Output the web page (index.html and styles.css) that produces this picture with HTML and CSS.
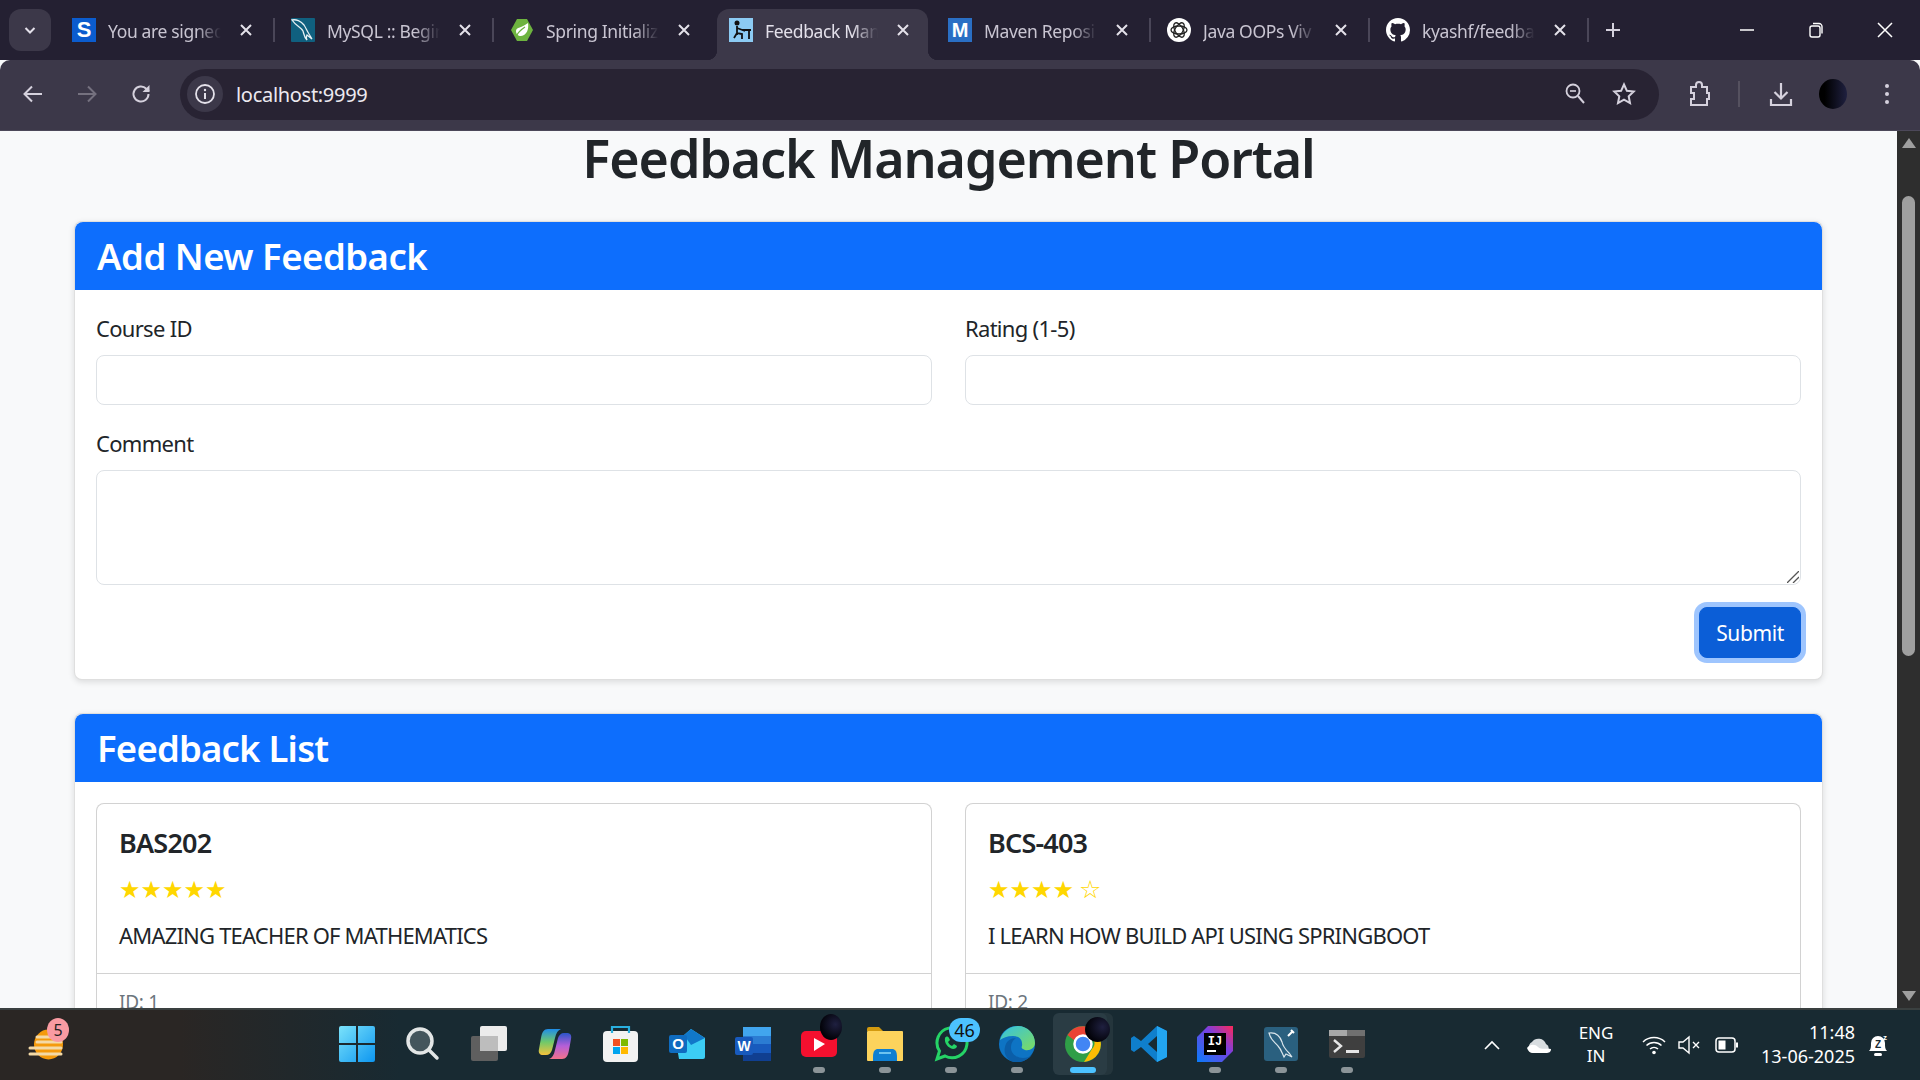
FILE: index.html
```html
<!doctype html>
<html>
<head>
<meta charset="utf-8">
<title>Feedback Management Portal</title>
<link rel="stylesheet" href="styles.css">
</head>
<body>

<!-- tab strip -->
<div class="tabstrip">
	<div class="tabmenu"><svg width="14" height="14" viewBox="0 0 14 14"><path d="M2.5 5l4.5 4.5L11.500 5" fill="none" stroke="#e4e1ea" stroke-width="2"/></svg></div>
	<div class="tabs">
		<div class="tab sep">
			<svg class="fav" viewBox="0 0 24 24"><rect width="24" height="24" fill="#0b5cce"/><text x="12" y="19" text-anchor="middle" font-family="Liberation Sans" font-weight="700" font-size="22" fill="#fff">S</text></svg>
			<span class="tabname">You are signed</span>
			<svg class="tabx" width="12" height="12" viewBox="0 0 12 12"><path d="M1 1l10 10M11 1L1 11" stroke="#e4e1ea" stroke-width="2"/></svg>
		</div>
		<div class="tab sep">
			<svg class="fav" viewBox="0 0 24 24"><rect width="24" height="24" rx="1" fill="#10607f"/><path d="M1 2c4-1 9 1 12 5 2 3 3 6 5 9l3 5-5-4c-1 2-1 3 0 5-3-3-3-6-4-9-2-4-7-5-11-11z" fill="none" stroke="#e6f0f4" stroke-width="1.300"/></svg>
			<span class="tabname">MySQL :: Begin</span>
			<svg class="tabx" width="12" height="12" viewBox="0 0 12 12"><path d="M1 1l10 10M11 1L1 11" stroke="#e4e1ea" stroke-width="2"/></svg>
		</div>
		<div class="tab">
			<svg class="fav" viewBox="0 0 24 24"><path d="M7 1h10l6 11-6 11H7L1 12z" fill="#6db33f"/><path d="M18 5c1 6-1 12-7 13-3 0-5-2-5-5 0-4 6-3 12-8z" fill="#fff"/><path d="M7 17c2-4 5-6 8-8" stroke="#6db33f" stroke-width="1.200" fill="none"/></svg>
			<span class="tabname">Spring Initializ</span>
			<svg class="tabx" width="12" height="12" viewBox="0 0 12 12"><path d="M1 1l10 10M11 1L1 11" stroke="#e4e1ea" stroke-width="2"/></svg>
		</div>
		<div class="tab active">
			<svg class="fav" viewBox="0 0 24 24"><rect width="24" height="24" fill="#8ccbf3"/><circle cx="8" cy="5" r="2.500" fill="#111"/><path d="M8 8v9M8 10l8 3M5 20l3-5 5 1v5M13 12h9M20 12v9" stroke="#111" stroke-width="1.800" fill="none"/></svg>
			<span class="tabname">Feedback Man</span>
			<svg class="tabx" width="12" height="12" viewBox="0 0 12 12"><path d="M1 1l10 10M11 1L1 11" stroke="#e4e1ea" stroke-width="2"/></svg>
		</div>
		<div class="tab sep">
			<svg class="fav" viewBox="0 0 24 24"><rect width="24" height="24" fill="#2a6fc4"/><text x="12" y="19" text-anchor="middle" font-family="Liberation Sans" font-weight="700" font-size="20" fill="#fff">M</text></svg>
			<span class="tabname">Maven Reposi</span>
			<svg class="tabx" width="12" height="12" viewBox="0 0 12 12"><path d="M1 1l10 10M11 1L1 11" stroke="#e4e1ea" stroke-width="2"/></svg>
		</div>
		<div class="tab sep">
			<svg class="fav" viewBox="0 0 24 24"><circle cx="12" cy="12" r="12" fill="#fff"/><g fill="none" stroke="#222" stroke-width="1.300"><ellipse cx="12" cy="12" rx="8" ry="4"/><ellipse cx="12" cy="12" rx="8" ry="4" transform="rotate(60 12 12)"/><ellipse cx="12" cy="12" rx="8" ry="4" transform="rotate(120 12 12)"/></g></svg>
			<span class="tabname">Java OOPs Viv</span>
			<svg class="tabx" width="12" height="12" viewBox="0 0 12 12"><path d="M1 1l10 10M11 1L1 11" stroke="#e4e1ea" stroke-width="2"/></svg>
		</div>
		<div class="tab sep">
			<svg class="fav" viewBox="0 0 16 16"><path fill="#fff" d="M8 0C3.580 0 0 3.580 0 8c0 3.540 2.290 6.530 5.470 7.590.4.070.55-.170.55-.380 0-.190-.010-.820-.010-1.490-2.010.370-2.530-.490-2.690-.940-.090-.230-.480-.940-.820-1.130-.280-.150-.680-.520-.010-.530.630-.010 1.080.580 1.230.820.720 1.210 1.870.870 2.330.660.070-.520.280-.870.510-1.070-1.780-.200-3.640-.890-3.640-3.950 0-.870.310-1.590.820-2.150-.080-.200-.360-1.020.080-2.120 0 0 .670-.210 2.200.820.640-.180 1.320-.270 2-.270s1.360.090 2 .270c1.530-1.040 2.200-.820 2.200-.820.440 1.100.160 1.920.080 2.120.510.560.820 1.270.820 2.150 0 3.070-1.870 3.750-3.650 3.950.290.250.540.730.540 1.480 0 1.070-.010 1.930-.010 2.200 0 .210.150.460.550.380A8.010 8.010 0 0 0 16 8c0-4.420-3.580-8-8-8z"/></svg>
			<span class="tabname">kyashf/feedba</span>
			<svg class="tabx" width="12" height="12" viewBox="0 0 12 12"><path d="M1 1l10 10M11 1L1 11" stroke="#e4e1ea" stroke-width="2"/></svg>
		</div>
	</div>
	<svg class="newtab" width="16" height="16" viewBox="0 0 16 16"><path d="M8 1v14M1 8h14" stroke="#d5d1dd" stroke-width="2"/></svg>
	<div class="winctl">
		<svg width="16" height="16" viewBox="0 0 16 16"><path d="M1 8h14" stroke="#fff" stroke-width="1.500"/></svg>
		<svg width="16" height="16" viewBox="0 0 16 16"><rect x="2" y="4" width="10" height="11" rx="2" fill="none" stroke="#fff" stroke-width="1.400"/><path d="M5 1.500h6a3 3 0 0 1 3 3v7" fill="none" stroke="#fff" stroke-width="1.400"/></svg>
		<svg width="16" height="16" viewBox="0 0 16 16"><path d="M1 1l14 14M15 1L1 15" stroke="#fff" stroke-width="1.500"/></svg>
	</div>
</div>

<!-- toolbar -->
<div class="toolbar">
	<div class="navbtn"><svg width="22" height="22" viewBox="0 0 22 22"><path d="M20 11H3M10 3.500L2.500 11l7.500 7.500" fill="none" stroke="#d5d1dd" stroke-width="2"/></svg></div>
	<div class="navbtn"><svg width="22" height="22" viewBox="0 0 22 22"><path d="M2 11h17M12 3.500l7.500 7.500-7.500 7.500" fill="none" stroke="#75717f" stroke-width="2"/></svg></div>
	<div class="navbtn"><svg width="22" height="22" viewBox="0 0 22 22"><path d="M18.500 11a7.500 7.500 0 1 1-2.200-5.300L19 8" fill="none" stroke="#d5d1dd" stroke-width="2"/><path d="M19.500 2v7h-7z" fill="#d5d1dd"/></svg></div>
	<div class="omnibox">
		<div class="siteinfo"><svg width="22" height="22" viewBox="0 0 22 22"><circle cx="11" cy="11" r="9" fill="none" stroke="#e4e1ea" stroke-width="1.800"/><path d="M11 10v6" stroke="#e4e1ea" stroke-width="2"/><circle cx="11" cy="7" r="1.200" fill="#e4e1ea"/></svg></div>
		<span class="url">localhost:9999</span>
		<svg class="zoomicon" width="22" height="24" viewBox="0 0 22 24"><circle cx="9" cy="9" r="6.500" fill="none" stroke="#d5d1dd" stroke-width="1.800"/><path d="M6 9h6" stroke="#d5d1dd" stroke-width="1.600"/><path d="M14 14l6 7" stroke="#d5d1dd" stroke-width="2"/></svg>
		<svg class="staricon" width="24" height="24" viewBox="0 0 24 24"><path d="M12 2.500l2.900 6.300 6.800.8-5 4.700 1.300 6.800-6-3.400-6 3.400 1.300-6.800-5-4.700 6.800-.8z" fill="none" stroke="#d5d1dd" stroke-width="2"/></svg>
	</div>
	<svg class="exticon" width="24" height="26" viewBox="0 0 24 26"><path d="M3 6h5V4a3 3 0 0 1 6 0v2h5v6h2v6h-2v6H3v-6h3v-6H3z" fill="none" stroke="#d5d1dd" stroke-width="2"/></svg>
	<span class="toolsep"></span>
	<svg class="dlicon" width="24" height="26" viewBox="0 0 24 26"><path d="M12 2v15M5.500 11l6.500 6.500 6.500-6.500" fill="none" stroke="#d5d1dd" stroke-width="2.200"/><path d="M2 18v6h20v-6" fill="none" stroke="#d5d1dd" stroke-width="2.200"/></svg>
	<span class="avatar"></span>
	<svg class="menuicon" width="6" height="24" viewBox="0 0 6 24"><circle cx="3" cy="4" r="2" fill="#d5d1dd"/><circle cx="3" cy="12" r="2" fill="#d5d1dd"/><circle cx="3" cy="20" r="2" fill="#d5d1dd"/></svg>
</div>

<!-- page -->
<div class="viewport">
	<div class="page">
		<h1 class="title">Feedback Management Portal</h1>

		<section class="card first">
			<h3 class="card-header">Add New Feedback</h3>
			<div class="card-body">
				<div class="row">
					<div class="field">
						<label>Course ID</label>
						<input type="text" class="control">
					</div>
					<div class="field">
						<label>Rating (1-5)</label>
						<input type="text" class="control">
					</div>
				</div>
				<div class="field">
					<label>Comment</label>
					<div class="areawrap">
						<textarea class="control area"></textarea>
						<svg class="grip" width="12" height="12" viewBox="0 0 12 12"><path d="M0 12L12 0M6 12l6-6" stroke="#555" stroke-width="1.300"/></svg>
					</div>
				</div>
				<div class="actions"><button class="btn">Submit</button></div>
			</div>
		</section>

		<section class="card second">
			<h3 class="card-header">Feedback List</h3>
			<div class="card-body">
				<div class="row">
					<div class="item">
						<div class="item-body">
							<h5>BAS202</h5>
							<div class="stars">★★★★★</div>
							<p>AMAZING TEACHER OF MATHEMATICS</p>
						</div>
						<div class="item-foot">ID: 1</div>
					</div>
					<div class="item">
						<div class="item-body">
							<h5>BCS-403</h5>
							<div class="stars">★★★★<i>☆</i></div>
							<p>I LEARN HOW BUILD API USING SPRINGBOOT</p>
						</div>
						<div class="item-foot">ID: 2</div>
					</div>
				</div>
			</div>
		</section>
	</div>
	<div class="scrollbar">
		<svg width="14" height="10" viewBox="0 0 14 10"><path d="M7 0l7 10H0z" fill="#9f9f9f"/></svg>
		<div class="thumb"></div>
		<svg width="14" height="10" viewBox="0 0 14 10"><path d="M0 0h14L7 10z" fill="#9f9f9f"/></svg>
	</div>
</div>

<!-- taskbar -->
<div class="taskbar">
	<div class="weather">
		<svg width="38" height="42" viewBox="0 0 38 42"><ellipse cx="22.500" cy="20.500" rx="14.500" ry="15" fill="#f59a0c"/><path d="M11 13h24M11 18h24M4 24h31M4 30h31" stroke="#f4d9a6" stroke-width="3" stroke-linecap="round"/></svg>
		<span class="badge-pink">5</span>
	</div>
	<div class="dock">
		<div class="dockitem"><svg width="36" height="36" viewBox="0 0 36 36"><defs><linearGradient id="w" x1="0" y1="0" x2="1" y2="1"><stop offset="0" stop-color="#7be3fb"/><stop offset="1" stop-color="#0d96f0"/></linearGradient></defs><path d="M0 2a2 2 0 0 1 2-2h15v17H0zM19 0h15a2 2 0 0 1 2 2v15H19zM0 19h17v17H2a2 2 0 0 1-2-2zM19 19h17v15a2 2 0 0 1-2 2H19z" fill="url(#w)"/></svg></div>
		<div class="dockitem"><svg width="36" height="36" viewBox="0 0 36 36"><circle cx="15" cy="15" r="12" fill="#44555c" stroke="#e3e6e6" stroke-width="3.500"/><path d="M24 24l8 8" stroke="#e3e6e6" stroke-width="3.500" stroke-linecap="round"/></svg></div>
		<div class="dockitem"><svg width="36" height="36" viewBox="0 0 36 36"><rect x="0" y="10" width="27" height="25" rx="2" fill="#5f5f5f"/><rect x="9" y="0" width="27" height="25" rx="2" fill="#ececec"/><rect x="9" y="10" width="18" height="15" fill="#bdbdbd"/></svg></div>
		<div class="dockitem"><svg width="34" height="32" viewBox="0 0 34 32"><defs><linearGradient id="c1" x1="0" y1="0" x2="0" y2="1"><stop offset="0" stop-color="#1f8de8"/><stop offset=".5" stop-color="#6fc96a"/><stop offset="1" stop-color="#f5c23c"/></linearGradient><linearGradient id="c2" x1="0" y1="0" x2="0" y2="1"><stop offset="0" stop-color="#2b55c9"/><stop offset=".5" stop-color="#b55fd8"/><stop offset="1" stop-color="#f3728a"/></linearGradient></defs><path d="M24 31H11c3-1 5-4 6-9l3-12c1-3 3-5 6-5h3c3 0 5 2 4 6l-2 11c-1 6-3 9-7 9z" fill="url(#c2)"/><path d="M10 1h13c-3 1-5 4-6 9l-3 12c-1 3-3 5-6 5H5c-3 0-5-2-4-6l2-11c1-6 3-9 7-9z" fill="url(#c1)"/></svg></div>
		<div class="dockitem"><svg width="36" height="36" viewBox="0 0 36 36"><rect x="0" y="5" width="35" height="31" rx="4" fill="#f2f2f2"/><path d="M9 7V1h17v6" fill="none" stroke="#29b0e0" stroke-width="2.200"/><rect x="10" y="13" width="7" height="7" fill="#f25022"/><rect x="18" y="13" width="7" height="7" fill="#7fba00"/><rect x="10" y="21" width="7" height="7" fill="#00a4ef"/><rect x="18" y="21" width="7" height="7" fill="#ffb900"/></svg></div>
		<div class="dockitem"><svg width="36" height="32" viewBox="0 0 36 32"><path d="M7 14L22 1l14 9v19a2 2 0 0 1-2 2H10z" fill="#3ccdf4"/><path d="M15 7l7-6 14 9-14 7z" fill="#1178c9"/><rect x="0" y="7" width="18" height="18" rx="2" fill="#0f6cc0"/><text x="9" y="21" text-anchor="middle" font-family="Liberation Sans" font-weight="700" font-size="15" fill="#fff">O</text></svg></div>
		<div class="dockitem"><svg width="36" height="34" viewBox="0 0 36 34"><rect x="8" y="0" width="28" height="34" rx="2" fill="#2b7cd3"/><rect x="8" y="0" width="28" height="9" fill="#41a5ee"/><rect x="8" y="17" width="28" height="9" fill="#185abd"/><rect x="8" y="26" width="28" height="8" fill="#103f91"/><rect x="0" y="10" width="18" height="18" rx="2" fill="#185abd"/><text x="9" y="24" text-anchor="middle" font-family="Liberation Sans" font-weight="700" font-size="14" fill="#fff">W</text></svg></div>
		<div class="dockitem open"><svg width="36" height="26" viewBox="0 0 36 26"><rect width="36" height="26" rx="5" fill="#f4102f"/><path d="M13 7l11 6-11 7z" fill="#fff"/></svg><span class="blob blob-yt"></span></div>
		<div class="dockitem open"><svg width="36" height="34" viewBox="0 0 36 34"><path d="M0 2a2 2 0 0 1 2-2h10l4 4H0z" fill="#d39a0f"/><rect y="4" width="36" height="30" rx="1" fill="#fdd35c"/><path d="M6 30c0-6 2-8 5-8h14c3 0 5 2 5 8v4H6z" fill="#0f7fd2"/><rect x="12" y="25" width="12" height="2" fill="#6cc3f0"/></svg></div>
		<div class="dockitem open"><svg width="36" height="36" viewBox="0 0 36 36"><path d="M4 33l2.500-8A15 15 0 1 1 12 30z" fill="none" stroke="#25d366" stroke-width="3"/><path d="M12 12c1-2 3-2 4 0l1 2-2 2c1 2 2 3 4 4l2-2 3 2c0 2-2 3-4 3-5-1-9-6-8-11z" fill="#25d366"/></svg><span class="badge-blue">46</span></div>
		<div class="dockitem open"><svg width="36" height="36" viewBox="0 0 36 36"><defs><linearGradient id="e1" x1="0" y1="0" x2="1" y2="1"><stop offset="0" stop-color="#33c1e4"/><stop offset="1" stop-color="#7edc5e"/></linearGradient></defs><circle cx="18" cy="18" r="18" fill="#0e74c4"/><path d="M1 14C4 4 12 0 19 0c10 0 17 8 17 17 0 5-5 8-10 7-3-1-4-2-3-4 1-6-3-10-9-10-6 0-10 2-13 4z" fill="url(#e1)"/><path d="M15 36c-6-1-11-8-9-15 1-6 6-9 11-9-3 2-5 5-5 10 0 6 6 10 12 10 3 0 7-1 9-3-4 5-11 8-18 7z" fill="#0b5ea8"/></svg></div>
		<div class="dockitem open focused"><svg width="36" height="36" viewBox="0 0 36 36"><circle cx="18" cy="18" r="18" fill="#2f9e47"/><path d="M2.500 9A18 18 0 0 1 34 10H18a8 8 0 0 0-8 5z" fill="#ea4335"/><path d="M34 10a18 18 0 0 1-15 26l8-13a8 8 0 0 0-2-13z" fill="#fbbc04"/><circle cx="18" cy="18" r="8.500" fill="#4285f4" stroke="#fff" stroke-width="2.500"/></svg><span class="blob blob-chrome"></span></div>
		<div class="dockitem"><svg width="36" height="36" viewBox="0 0 36 36"><path d="M26 0l10 5v26l-10 5-16-15-7 5-3-2v-12l3-2 7 5z" fill="#0f7fcc"/><path d="M26 0l10 5v26l-10 5z" fill="#22a5f1"/><path d="M26 10l-9 8 9 8z" fill="#182a32"/></svg></div>
		<div class="dockitem open"><svg width="36" height="36" viewBox="0 0 36 36"><defs><linearGradient id="ij" x1="0" y1="1" x2="1" y2="0"><stop offset="0" stop-color="#087cfa"/><stop offset=".6" stop-color="#7b3fe0"/><stop offset="1" stop-color="#fe2857"/></linearGradient></defs><path d="M11 0h25v25L25 36H0V11z" fill="url(#ij)"/><rect x="7" y="7" width="22" height="22" fill="#000"/><text x="18" y="19" text-anchor="middle" font-family="Liberation Mono" font-weight="700" font-size="12" fill="#fff">IJ</text><rect x="10" y="24" width="9" height="2" fill="#fff"/></svg></div>
		<div class="dockitem open"><svg width="34" height="34" viewBox="0 0 34 34"><rect width="34" height="34" rx="3" fill="#2a607f"/><path d="M5 6c7-1 11 3 13 9 1 5 4 8 7 11l3 4-6-3-2 3c-2-4-3-8-6-11-3-4-7-5-9-13z" fill="none" stroke="#dbe6ec" stroke-width="1.200"/><path d="M24 9l5-5M27 3l3 3" stroke="#fff" stroke-width="2"/></svg></div>
		<div class="dockitem open"><svg width="36" height="28" viewBox="0 0 36 28"><rect width="36" height="28" rx="2" fill="#3f3f3f"/><rect width="36" height="6" fill="#a8a8a8"/><rect x="18" width="18" height="6" fill="#707070"/><path d="M5 10l7 6-7 6" fill="none" stroke="#e6e6e6" stroke-width="2.400"/><rect x="17" y="20" width="13" height="3" fill="#e6e6e6"/></svg></div>
	</div>
	<div class="tray">
		<svg class="caret" width="16" height="10" viewBox="0 0 16 10"><path d="M1 9l7-7 7 7" fill="none" stroke="#fff" stroke-width="1.600"/></svg>
		<svg class="cloud" width="26" height="18" viewBox="0 0 26 18"><path d="M7 17a6 6 0 0 1-1-11 8 8 0 0 1 14 2 5 5 0 0 1 0 9z" fill="#d8dde0"/><path d="M1 12c3-4 8-4 11-1s9 1 13 2c0 3-2 4-5 4H7c-3 0-5-2-6-5z" fill="#fff"/></svg>
		<div class="lang"><span>ENG</span><span>IN</span></div>
		<svg class="wifi" width="24" height="20" viewBox="0 0 24 20"><path d="M1 7a16 16 0 0 1 22 0M4.500 10.500a11 11 0 0 1 15 0M8 14a6 6 0 0 1 8 0" fill="none" stroke="#fff" stroke-width="1.500"/><circle cx="12" cy="17.500" r="1.800" fill="#fff"/></svg>
		<svg class="speaker" width="24" height="20" viewBox="0 0 24 20"><path d="M1 7v6h4l6 5V2L5 7z" fill="none" stroke="#fff" stroke-width="1.400"/><path d="M15 7l6 6M21 7l-6 6" stroke="#fff" stroke-width="1.400"/></svg>
		<svg class="battery" width="24" height="16" viewBox="0 0 24 16"><rect x="1" y="1" width="19" height="14" rx="3" fill="none" stroke="#fff" stroke-width="1.500"/><rect x="3.500" y="3.500" width="7" height="9" fill="#fff"/><rect x="21" y="5.500" width="2" height="5" fill="#fff"/></svg>
		<div class="clock"><span>11:48</span><span>13-06-2025</span></div>
		<svg class="bell" width="22" height="26" viewBox="0 0 22 26"><path d="M2 19c2-2 2-4 2-8a7 7 0 0 1 14 0c0 4 0 6 2 8z" fill="#fff"/><rect x="7" y="21" width="8" height="3" rx="1.500" fill="#fff"/><text x="11" y="16" text-anchor="middle" font-family="Liberation Sans" font-weight="700" font-size="10" fill="#1a2a30">Z</text><text x="18" y="8" text-anchor="middle" font-family="Liberation Sans" font-weight="700" font-size="8" fill="#fff">z</text></svg>
	</div>
</div>

</body>
</html>
```
FILE: styles.css
```css
* {margin:0;padding:0;box-sizing:border-box;}
html,body {height:100%;}
body {
	display:flex;
	flex-direction:column;
	height:1080px;
	overflow:hidden;
	background:#f8f9fa;
	font-family:"Noto Sans","Open Sans","Liberation Sans",sans-serif;
	color:#212529;
}

/* tab strip */
.tabstrip {
	display:flex;
	align-items:flex-end;
	height:60px;
	flex:none;
	background:#242032;
	color:#c9c5d2;
}
.tabmenu {
	display:flex;
	align-items:center;
	justify-content:center;
	width:42px;
	height:42px;
	margin:0 9px 9px 9px;
	border-radius:12px;
	background:#3c3849;
}
.tabs {display:flex;}
.tab {
	position:relative;
	display:flex;
	align-items:center;
	width:219px;
	height:51px;
	padding:0 0 9px 12px;
}
.tab.sep::after {
	content:"";
	position:absolute;
	right:4px;
	top:9px;
	width:2px;
	height:24px;
	background:#4a4658;
}
.tab.active {
	width:211px;
	margin-right:8px;
	border-radius:12px 12px 0 0;
	background:#3c3849;
	color:#e3e0ea;
}
/* flares where the active tab meets the toolbar */
.tab.active::before,
.tab.active::after {
	content:"";
	position:absolute;
	bottom:0;
	width:10px;
	height:10px;
}
.tab.active::before {left:-10px;background:radial-gradient(circle at 0 0,transparent 10px,#3c3849 10.500px);}
.tab.active::after {right:-10px;background:radial-gradient(circle at 100% 0,transparent 10px,#3c3849 10.500px);}
.fav {width:24px;height:24px;flex:none;}
.tabname {
	width:121px;
	margin-left:12px;
	padding-top:2px;
	white-space:nowrap;
	font-size:17.500px;
	letter-spacing:-.35px;
	-webkit-mask-image:linear-gradient(to right,#000 88px,transparent 113px);
	mask-image:linear-gradient(to right,#000 88px,transparent 113px);
}
.tabx {flex:none;margin-left:11px;}
.newtab {margin:0 0 22px 12px;}
.winctl {
	display:flex;
	align-items:center;
	justify-content:space-between;
	width:154px;
	margin:0 27px 22px auto;
}

/* toolbar */
.toolbar {
	display:flex;
	align-items:center;
	height:71px;
	flex:none;
	padding:9px 0 11px 22px;
	border-radius:10px 10px 0 0;
	border-bottom:1px solid #4c4859;
	background:#3c3849;
}
.navbtn {
	display:flex;
	align-items:center;
	justify-content:center;
	width:22px;
	margin-right:32px;
}
.navbtn:nth-child(3) {margin-right:28px;}
.omnibox {
	display:flex;
	align-items:center;
	width:1479px;
	height:51px;
	padding:0 23px 0 7px;
	border-radius:26px;
	background:#282333;
}
.siteinfo {
	display:flex;
	align-items:center;
	justify-content:center;
	width:36px;
	height:36px;
	border-radius:50%;
	background:#3c3849;
}
.url {
	margin-left:13px;
	font-size:20px;
	letter-spacing:-.3px;
	color:#ece9f0;
}
.zoomicon {margin-left:auto;}
.staricon {margin-left:26px;}
.exticon {margin-left:29px;}
.toolsep {width:2px;height:26px;margin-left:26px;background:#55515f;}
.dlicon {margin-left:29px;}
.avatar {
	width:28px;
	height:30px;
	margin-left:26px;
	border-radius:50%;
	background:linear-gradient(90deg,#000 20%,#1f2040);
}
.menuicon {margin-left:37px;}

/* page */
.viewport {
	display:flex;
	flex:1;
	min-height:0;
	overflow:hidden;
}
.page {
	flex:1;
	min-width:0;
	padding:0 74px;
}
.title {
	margin-bottom:36px;
	text-align:center;
	font-size:52px;
	font-weight:600;
	line-height:54px;
	letter-spacing:-1.100px;
}
.card {
	margin-bottom:33px;
	border:1px solid rgba(0,0,0,.125);
	border-radius:8px;
	background:#fff;
	box-shadow:0 2px 6px rgba(0,0,0,.12);
}
.card-header {
	padding:11px 22px;
	border-radius:8px 8px 0 0;
	background:#0d6efd;
	color:#fff;
	font-size:36.500px;
	font-weight:600;
	line-height:46px;
	letter-spacing:-.5px;
}
.second .card-header {letter-spacing:-.8px;}
.card-body {padding:22px 21px;}
.first .card-body {padding-bottom:21px;}
.second .card-body {padding-top:21px;}
.row {
	display:grid;
	grid-template-columns:1fr 1fr;
	gap:33px;
}
.field {margin-bottom:22px;}
.field label {
	display:block;
	margin-bottom:10px;
	font-size:22px;
	line-height:33px;
	letter-spacing:-.7px;
}
.control {
	display:block;
	width:100%;
	height:50px;
	border:1px solid #dee2e6;
	border-radius:8px;
	background:#fff;
}
.areawrap {position:relative;}
.area {height:115px;resize:none;}
.grip {position:absolute;right:2px;bottom:2px;}
.actions {display:flex;justify-content:flex-end;}
.btn {
	width:102px;
	height:51px;
	border:1px solid #0b5ed7;
	border-radius:8px;
	background:#0b5ed7;
	color:#fff;
	font-family:inherit;
	font-size:21px;
	letter-spacing:-.4px;
	box-shadow:0 0 0 5px #9ec5fe;
}
.item {
	border:1px solid rgba(0,0,0,.175);
	border-radius:8px;
	background:#fff;
}
.item-body {
	height:170px;
	padding:22px;
	border-bottom:1px solid rgba(0,0,0,.175);
}
.item-body h5 {
	font-size:27px;
	font-weight:600;
	line-height:33px;
	letter-spacing:-.8px;
}
.stars {
	height:33px;
	margin-top:15px;
	font-family:"DejaVu Sans",sans-serif;
	font-size:24px;
	line-height:33px;
	color:#ffd700;
}
.stars i {font-style:normal;font-size:25px;line-height:1;margin-left:5px;}
.item-body p {
	margin-top:12px;
	font-size:22px;
	line-height:33px;
	letter-spacing:-.8px;
}
.item-foot {
	padding:12px 22px;
	font-size:19px;
	line-height:33px;
	letter-spacing:-.3px;
	color:#6c757d;
}
.scrollbar {
	display:flex;
	flex-direction:column;
	align-items:center;
	flex:none;
	width:23px;
	padding:7px 0;
	background:#2e2e2e;
}
.thumb {
	width:13px;
	height:460px;
	margin:48px 0 auto 0;
	border-radius:7px;
	background:#9f9f9f;
}

/* taskbar */
.taskbar {
	display:flex;
	align-items:center;
	height:72px;
	flex:none;
	border-top:2px solid #3a4040;
	background:linear-gradient(90deg,#2a2624 0,#2a2624 180px,#182a32 400px,#182a32 100%);
	color:#fff;
}
.weather {
	position:relative;
	width:324px;
	padding-left:26px;
	display:flex;
	align-items:center;
}
.badge-pink {
	position:absolute;
	left:47px;
	top:-6px;
	width:22px;
	height:24px;
	border-radius:50%;
	background:#f99ba2;
	color:#222;
	text-align:center;
	font-size:16px;
	line-height:24px;
}
.dock {display:flex;margin-bottom:2px;}
.dockitem {
	position:relative;
	display:flex;
	align-items:center;
	justify-content:center;
	width:66px;
	height:66px;
}
.dockitem svg {position:relative;z-index:1;}
.dockitem.open::after {
	content:"";
	position:absolute;
	left:27px;
	bottom:4px;
	width:12px;
	height:6px;
	border-radius:3px;
	background:#8b9498;
}
.dockitem.focused::before {
	content:"";
	position:absolute;
	left:3px;
	top:2px;
	width:54px;
	height:62px;
	border-radius:6px;
	background:#2a3c44;
	box-shadow:6px 0 0 #24353c;
}
.dockitem.focused::after {left:20px;width:26px;z-index:1;background:#4cc2ff;}
.blob {
	position:absolute;
	z-index:2;
	border-radius:50%;
	background:radial-gradient(circle at 70% 40%,#1f2040,#020208 70%);
}
.blob-yt {left:34px;top:3px;width:22px;height:26px;}
.blob-chrome {left:35px;top:6px;width:25px;height:25px;}
.badge-blue {
	position:absolute;
	z-index:2;
	left:31px;
	top:7px;
	width:31px;
	height:24px;
	border-radius:12px;
	background:#4cc2ff;
	color:#111;
	text-align:center;
	font-size:18px;
	line-height:24px;
}
.tray {
	display:flex;
	align-items:center;
	flex:1;
	padding-left:104px;
	font-size:17px;
}
.cloud {margin-left:26px;}
.lang {
	display:flex;
	flex-direction:column;
	align-items:center;
	gap:2px;
	width:44px;
	margin:0 0 2px 22px;
	line-height:21px;
}
.wifi {margin-left:24px;}
.speaker {margin-left:12px;}
.battery {margin-left:13px;}
.clock {
	display:flex;
	flex-direction:column;
	align-items:flex-end;
	gap:3px;
	width:110px;
	margin:0 0 2px 6px;
	font-size:18px;
	line-height:21px;
}
.bell {margin-left:12px;}
```
